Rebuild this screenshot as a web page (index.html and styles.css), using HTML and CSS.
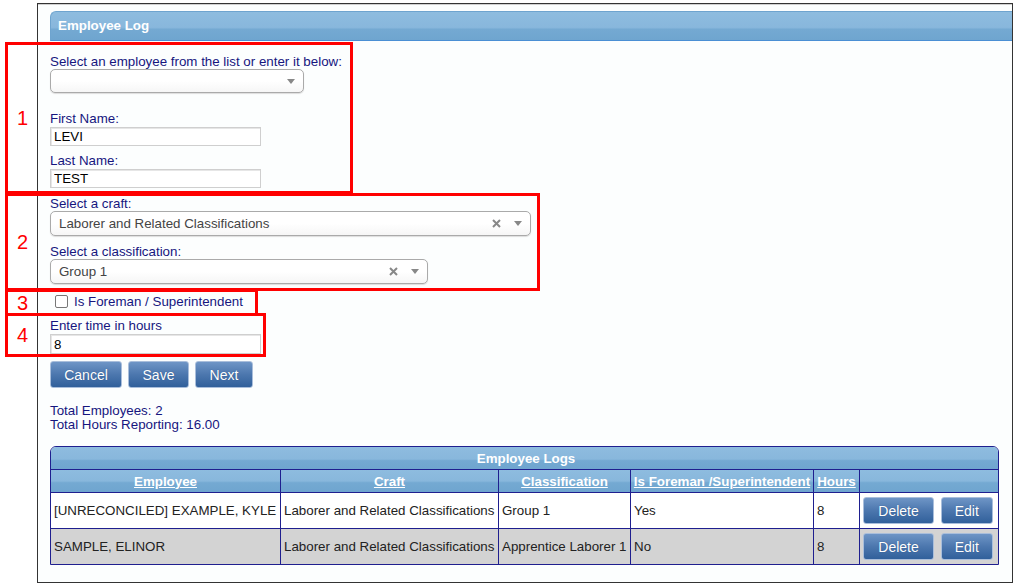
FILE: index.html
```html
<!DOCTYPE html>
<html lang="en">
  <head>
    <meta charset="UTF-8" />
    <title>Employee Log</title>
    <link rel="stylesheet" href="styles.css">
  </head>

  <body>
    <div class="frame">
      <div class="panel-title">Employee Log</div>

      <form class="form">
        <div class="field field-employee">
          <label class="lbl">Select an employee from the list or enter it below:</label>
          <div class="combo combo-employee">
            <span class="combo-text"></span>
            <span class="combo-arrow"></span>
          </div>
        </div>

        <div class="field field-first">
          <label class="lbl" for="firstName">First Name:</label>
          <input class="text-input" type="text" id="firstName" value="LEVI" />
        </div>

        <div class="field field-last">
          <label class="lbl" for="lastName">Last Name:</label>
          <input class="text-input" type="text" id="lastName" value="TEST" />
        </div>

        <div class="field">
          <label class="lbl">Select a craft:</label>
          <div class="combo combo-craft">
            <span class="combo-text">Laborer and Related Classifications</span>
            <svg class="combo-clear" width="9" height="9" viewBox="0 0 9 9"><path d="M1 1L8 8M8 1L1 8" /></svg>
            <span class="combo-arrow"></span>
          </div>
        </div>

        <div class="field">
          <label class="lbl">Select a classification:</label>
          <div class="combo combo-class">
            <span class="combo-text">Group 1</span>
            <svg class="combo-clear" width="9" height="9" viewBox="0 0 9 9"><path d="M1 1L8 8M8 1L1 8" /></svg>
            <span class="combo-arrow"></span>
          </div>
        </div>

        <div class="check-row">
          <span class="checkbox"></span>
          <span class="lbl-inline">Is Foreman / Superintendent</span>
        </div>

        <div class="field field-time">
          <label class="lbl" for="hours">Enter time in hours</label>
          <input class="text-input text-input-tall" type="text" id="hours" value="8" />
        </div>

        <div class="actions">
          <button type="button" class="btn btn-cancel">Cancel</button>
          <button type="button" class="btn btn-save">Save</button>
          <button type="button" class="btn btn-next">Next</button>
        </div>

        <div class="totals">
          Total Employees: 2<br />
          Total Hours Reporting: 16.00
        </div>

        <div class="logs-wrap">
          <table class="logs">
            <colgroup>
              <col class="col-emp" />
              <col class="col-craft" />
              <col class="col-class" />
              <col class="col-fore" />
              <col class="col-hours" />
              <col class="col-act" />
            </colgroup>
            <tr>
              <th class="logs-title" colspan="6">Employee Logs</th>
            </tr>
            <tr class="logs-head">
              <th><a href="#">Employee</a></th>
              <th><a href="#">Craft</a></th>
              <th><a href="#">Classification</a></th>
              <th><a href="#">Is Foreman /Superintendent</a></th>
              <th><a href="#">Hours</a></th>
              <th></th>
            </tr>
            <tr>
              <td>[UNRECONCILED] EXAMPLE, KYLE</td>
              <td>Laborer and Related Classifications</td>
              <td>Group 1</td>
              <td>Yes</td>
              <td>8</td>
              <td class="cell-act">
                <button type="button" class="btn btn-delete">Delete</button>
                <button type="button" class="btn btn-edit">Edit</button>
              </td>
            </tr>
            <tr class="row-alt">
              <td>SAMPLE, ELINOR</td>
              <td>Laborer and Related Classifications</td>
              <td>Apprentice Laborer 1</td>
              <td>No</td>
              <td>8</td>
              <td class="cell-act">
                <button type="button" class="btn btn-delete">Delete</button>
                <button type="button" class="btn btn-edit">Edit</button>
              </td>
            </tr>
          </table>
        </div>
      </form>
    </div>

    <!-- callouts drawn over the screenshot -->
    <div class="callout callout-1"><span class="callout-num">1</span></div>
    <div class="callout callout-2"><span class="callout-num">2</span></div>
    <div class="callout callout-3"><span class="callout-num">3</span></div>
    <div class="callout callout-4"><span class="callout-num">4</span></div>
  </body>
</html>
```

FILE: styles.css
```css
body {
  margin: 0;
  position: relative;
  font-family: "Liberation Sans", Arial, sans-serif;
  font-size: 13.33px;
  background: #fff;
}

.frame {
  margin: 3px 0 0 37px;
  width: 974px;
  height: 578px;
  border: 1px solid #333;
  background: #fcfefe;
  box-shadow: inset 0 1px 0 #d0d0d0;
}

.panel-title {
  margin: 7px 0 0 12px;
  height: 28px;
  line-height: 28px;
  padding-left: 7px;
  border: 1px solid #6ea4cf;
  border-right: 0;
  border-bottom-color: #4a8fd4;
  border-top-left-radius: 6px;
  background: linear-gradient(to bottom, #8ebcdf 0%, #88b7dc 55%, #74a9d2 62%, #6fa5cf 100%);
  color: #fff;
  font-weight: bold;
  font-size: 13.33px;
}

.form {
  padding-left: 12px;
}

.lbl,
.lbl-inline {
  display: block;
  line-height: 15px;
  color: #16167e;
}

.field {
  margin-top: 8px;
}

.field-employee {
  margin-top: 13px;
}

.field-first {
  margin-top: 18px;
}

.field-last {
  margin-top: 7px;
}

.field-time {
  margin-top: 9px;
}

.text-input {
  display: block;
  box-sizing: border-box;
  margin: 1px 0 0;
  width: 211px;
  height: 19px;
  padding: 0 3px;
  border: 1px solid #cfcfcf;
  box-shadow: inset 1px 1px 0 #e6e6e6;
  background: #fff;
  font-family: "Liberation Sans", Arial, sans-serif;
  font-size: 13.33px;
  color: #000;
}

.text-input-tall {
  height: 20px;
}

.combo {
  display: flex;
  align-items: center;
  box-sizing: border-box;
  height: 25px;
  padding-left: 8px;
  border: 1px solid #aaa;
  border-radius: 5px;
  background: linear-gradient(to bottom, #fff 50%, #f6f6f6 100%);
  box-shadow: 0 1px 1px #ddd;
  color: #444;
}

.combo-employee {
  width: 254px;
  height: 24px;
}

.combo-craft {
  width: 481px;
}

.combo-class {
  width: 378px;
}

.combo-text {
  flex: 1;
}

.combo-clear {
  margin-right: 13px;
  stroke: #888;
  stroke-width: 2;
}

.combo-arrow {
  width: 0;
  height: 0;
  margin-right: 8px;
  border-left: 4px solid transparent;
  border-right: 4px solid transparent;
  border-top: 5px solid #888;
}

.check-row {
  display: flex;
  align-items: center;
  margin-top: 10px;
  height: 15px;
}

.checkbox {
  box-sizing: border-box;
  width: 13px;
  height: 13px;
  margin: 0 6px 0 5px;
  border: 1px solid #777;
  border-radius: 2px;
  background: #fff;
}

.actions {
  display: flex;
  gap: 6px;
  margin-top: 7px;
}

.btn {
  height: 27px;
  padding: 0;
  border: 1px solid #a9bedb;
  border-radius: 3px;
  background: linear-gradient(to bottom, #6e95c6 0%, #4c77ae 50%, #31609b 100%);
  color: #fff;
  font-family: "Liberation Sans", Arial, sans-serif;
  font-size: 14px;
  text-shadow: 0 0 1px #2a4f80;
}

.btn-cancel { width: 72px; }
.btn-save { width: 61px; }
.btn-next { width: 58px; }
.btn-delete { width: 71px; }
.btn-edit { width: 52px; }

.totals {
  margin-top: 16px;
  line-height: 14px;
  color: #16167e;
}

.logs-wrap {
  margin-top: 14px;
  width: 949px;
  box-sizing: border-box;
  border: 1px solid #1f1f8f;
  border-radius: 6px 6px 0 0;
  overflow: hidden;
}

.logs {
  width: 947px;
  table-layout: fixed;
  border-collapse: separate;
  border-spacing: 0;
}

.col-emp { width: 230px; }
.col-craft { width: 218px; }
.col-class { width: 132px; }
.col-fore { width: 183px; }
.col-hours { width: 46px; }
.col-act { width: 138px; }

.logs th,
.logs td {
  box-sizing: border-box;
  padding: 0 0 0 3px;
  border-top: 1px solid #1f1f8f;
  border-right: 1px solid #1f1f8f;
  white-space: nowrap;
  overflow: hidden;
}

.logs th:last-child,
.logs td:last-child {
  border-right: 0;
}

.logs .logs-title {
  height: 22px;
  border-top: 0;
  background: linear-gradient(to bottom, #8ebcdf 0%, #88b7dc 55%, #74a9d2 62%, #6fa5cf 100%);
  color: #fff;
  font-weight: bold;
  text-align: center;
}

.logs-head th {
  height: 23px;
  padding: 0;
  background: linear-gradient(to bottom, #8ebcdf 0%, #88b7dc 50%, #74a9d2 58%, #6fa5cf 100%);
  text-align: center;
}

.logs-head a {
  color: #fff;
  font-weight: bold;
}

.logs td {
  height: 36px;
  color: #222;
  background: #fff;
}

.logs .row-alt td {
  background: #d3d3d3;
}

.logs .cell-act {
  padding-left: 3px;
}

.cell-act .btn + .btn {
  margin-left: 3px;
}

.callout {
  position: absolute;
  box-sizing: border-box;
  border: 3px solid #f00;
}

.callout-1 { left: 5px; top: 42px; width: 348px; height: 152px; }
.callout-2 { left: 5px; top: 193px; width: 535px; height: 98px; }
.callout-3 { left: 5px; top: 289px; width: 253px; height: 27px; }
.callout-4 { left: 5px; top: 313px; width: 261px; height: 44px; }

.callout-num {
  position: absolute;
  left: 9px;
  top: 50%;
  transform: translateY(-50%);
  color: #f00;
  font-size: 20px;
  line-height: 20px;
}
```
